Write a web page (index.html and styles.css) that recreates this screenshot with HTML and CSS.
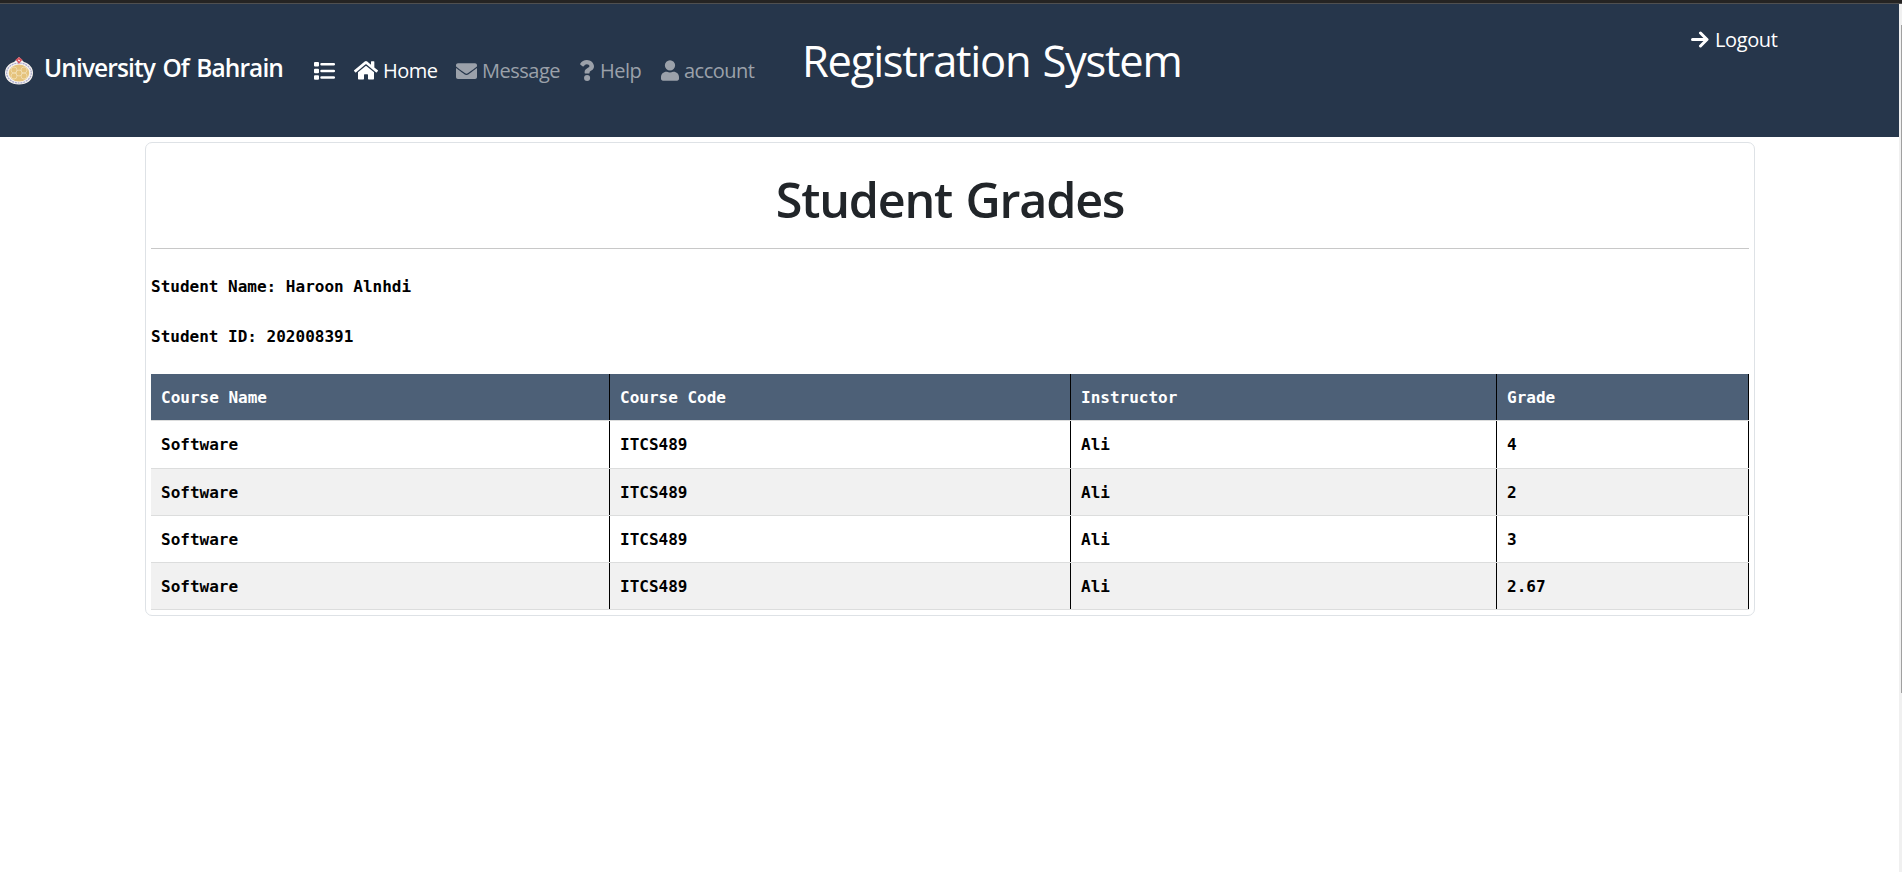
FILE: index.html
```html
<!DOCTYPE html>
<html lang="en">
<head>
<meta charset="utf-8">
<title>Student Grades</title>
<link rel="stylesheet" href="styles.css">
</head>
<body>
<div class="window-edge"></div>
<div class="viewport">
  <div class="page">
    <header class="navbar">
      <a class="brand">
        <svg class="crest" viewBox="0 0 28 28">
          <path d="M14 0 19 5C25 7 28 11 28 16 28 23 22 27.500 14 27.500S0 23 0 16C0 11 3 7 9 5Z" fill="#f6f3ee"/>
          <ellipse cx="14" cy="16" rx="12.300" ry="10" fill="none" stroke="#a9a9d0" stroke-width="1.200" stroke-dasharray="2 .8"/>
          <ellipse cx="14" cy="16" rx="10.200" ry="8.600" fill="#e5c37c"/>
          <g fill="none" stroke="#f3dfb5" stroke-width=".8"><circle cx="14" cy="16" r="3"/><circle cx="9" cy="13" r="3"/><circle cx="19" cy="13" r="3"/><circle cx="9" cy="19" r="3"/><circle cx="19" cy="19" r="3"/></g>
          <path d="m14 0 3.500 2.800-1.700 1.700L14 7l-1.800-2.500-1.700-1.700Z" fill="#d95560"/><path d="m13 3 2 1" stroke="#fff"/>
        </svg>
        <span class="brand-name">University Of Bahrain</span>
      </a>
      <nav class="links">
        <a class="link on list"><svg class="i-list" viewBox="0 0 21 18"><path d="M1 0h3q1 0 1 1v2.500q0 1-1 1H1q-1 0-1-1V1Q0 0 1 0ZM1 6.700h3q1 0 1 1v2.500q0 1-1 1H1q-1 0-1-1V7.700q0-1 1-1ZM1 13.300h3q1 0 1 1v2.500q0 1-1 1H1q-1 0-1-1v-2.500q0-1 1-1ZM7.500 1h12.300a1.250 1.250 0 0 1 0 2.500H7.500a1.250 1.250 0 0 1 0-2.500ZM7.500 7.700h12.300a1.250 1.250 0 0 1 0 2.500H7.500a1.250 1.250 0 0 1 0-2.500ZM7.500 14.300h12.300a1.250 1.250 0 0 1 0 2.500H7.500a1.250 1.250 0 0 1 0-2.500Z"/></svg></a>
        <a class="link on home"><svg class="i-home" viewBox="0 0 576 448"><path d="M280 116 96 268v156c0 9 7 16 16 16h112c9 0 16-7 16-16v-96c0-9 7-16 16-16h64c9 0 16 7 16 16v96c0 9 7 16 16 16h112c9 0 16-7 16-16V268L296 116c-5-4-11-4-16 0Zm292 103-84-69V12c0-7-5-12-12-12h-56c-7 0-12 5-12 12v72L318 10a48 48 0 0 0-61 0L4 219c-5 4-6 12-2 17l26 31c4 5 12 6 17 2L280 75c5-4 11-4 15 0l236 194c5 4 13 3 17-2l26-31c4-5 3-13-2-17Z"/></svg><span>Home</span></a>
        <a class="link message"><svg class="i-mail" viewBox="0 0 512 384"><path d="M502 127c4-3 10 0 10 5v204c0 27-21 48-48 48H48c-27 0-48-21-48-48V132c0-5 6-8 10-5 22 17 52 40 155 114 21 15 56 48 91 47 35 1 71-32 91-47 103-74 133-97 155-114ZM256 256c23 0 57-29 74-41 133-97 143-105 174-129 5-4 8-11 8-18V48c0-27-21-48-48-48H48C21 0 0 21 0 48v20c0 7 3 14 8 18 31 24 41 32 174 129 17 12 51 41 74 41Z"/></svg><span>Message</span></a>
        <a class="link help"><svg class="i-question" viewBox="0 0 14 21"><path d="M6.900 0C3.800 0 1.800 1.300.3 3.600c-.3.400-.2.900.2 1.200l2 1.500c.4.300.9.200 1.200-.1C4.700 4.900 5.400 4.200 6.900 4.200c1.200 0 2.600.8 2.600 1.900 0 .9-.7 1.300-1.900 2C6.200 8.900 4.600 9.900 4.600 12.100v.6c0 .5.400.9.900.9h3.200c.5 0 .9-.4.900-.9v-.4c0-1.600 4.400-1.600 4.400-6C14 2.900 10.500 0 6.900 0ZM7.100 14.900a3 3 0 1 0 0 6.100 3 3 0 0 0 0-6.100Z"/></svg><span>Help</span></a>
        <a class="link account"><svg class="i-user" viewBox="0 0 448 512"><path d="M224 256a128 128 0 1 0 0-256 128 128 0 0 0 0 256Zm90 32h-17a174 174 0 0 1-146 0h-17C60 288 0 348 0 422v42c0 27 21 48 48 48h352c27 0 48-21 48-48v-42c0-74-60-134-134-134Z"/></svg><span>account</span></a>
      </nav>
      <div class="system-title">Registration System</div>
      <a class="logout"><svg class="i-arrow" viewBox="0 0 18 17"><path d="M1.500 8.500H15M9.500 2l6.500 6.500-6.500 6.500" fill="none" stroke="#fff" stroke-width="3" stroke-linecap="round" stroke-linejoin="round"/></svg><span>Logout</span></a>
    </header>
    <main class="card">
      <h1 class="title">Student Grades</h1>
      <p class="info">Student Name: Haroon Alnhdi</p>
      <p class="info">Student ID: 202008391</p>
      <div class="grades">
        <div class="row head"><span>Course Name</span><span>Course Code</span><span>Instructor</span><span>Grade</span></div>
        <div class="row first"><span>Software</span><span>ITCS489</span><span>Ali</span><span>4</span></div>
        <div class="row even"><span>Software</span><span>ITCS489</span><span>Ali</span><span>2</span></div>
        <div class="row"><span>Software</span><span>ITCS489</span><span>Ali</span><span>3</span></div>
        <div class="row even"><span>Software</span><span>ITCS489</span><span>Ali</span><span>2.67</span></div>
      </div>
    </main>
  </div>
  <div class="scrollbar"><div class="thumb"></div></div>
</div>
</body>
</html>
```
FILE: styles.css
```css
* { box-sizing: border-box; }
body { margin: 0; height: 872px; overflow: hidden; background: #fff; font-family: "Open Sans", sans-serif; }
.window-edge { height: 4px; background: #252423; border-bottom: 1px solid #505050; }
.viewport { display: flex; height: 868px; }
.page { flex: 1; }
.scrollbar { width: 3px; background: #f0f0f0; padding: 21px 0 0 2px; }
.thumb { height: 668px; background: #a0a0a0; }

.navbar { display: flex; align-items: flex-start; height: 133px; background: #26364b; color: #fff; white-space: nowrap; }
.brand { display: flex; width: 314px; padding: 53px 0 0 5px; }
.crest { width: 28px; height: 28px; margin-right: 11px; }
.brand-name { font-size: 24.5px; font-weight: 600; line-height: 34px; margin-top: -6px; letter-spacing: -0.9px; word-spacing: 2px; }
.links { display: flex; width: 488px; padding-top: 52px; }
.link, .logout { display: flex; font-size: 20px; line-height: 30px; letter-spacing: -0.5px; }
.link { color: #9ba1aa; }
.link.on { color: #fff; }
.link svg { fill: currentColor; display: block; flex: none; }
.list { width: 40px; }
.home { width: 102px; }
.message { width: 124px; }
.help { width: 81px; }
.i-list { width: 21px; height: 18px; margin-top: 6px; }
.i-home { width: 24px; height: 19px; margin: 5px 5px 0 0; }
.link .i-mail { width: 21px; height: 16px; margin: 7px 5px 0 0; }
.i-question { width: 14px; height: 21px; margin: 4px 6px 0 0; }
.i-user { width: 18px; height: 21px; margin: 4px 5px 0 0; }
.system-title { width: 889px; font-size: 43.5px; line-height: 60px; padding-top: 27px; letter-spacing: -1.25px; word-spacing: 2px; }
.logout { padding-top: 21px; letter-spacing: -0.4px; }
.i-arrow { width: 18px; height: 17px; margin: 6px 6px 0 0; }

.card { width: 1610px; height: 474px; margin: 5px 0 0 145px; padding: 0 5px; border: 1px solid #dee2e6; border-radius: 7px; }
.title { margin: 0 0 20px; height: 106px; padding-top: 23px; border-bottom: 1px solid #c8c8c8; text-align: center; font-size: 48.5px; line-height: 67px; font-weight: 600; color: #212529; letter-spacing: -1.2px; word-spacing: 2px; }
.info, .row { font-family: "DejaVu Sans Mono", monospace; font-size: 16px; font-weight: 700; color: #000; }
.info { margin: 0 0 14px; height: 36px; line-height: 36px; }
.grades { margin-top: 19px; }
.row { display: grid; grid-template-columns: 459px 461px 426px 252px; height: 47px; border-bottom: 1px solid #dcdddd; }
.row span { padding-left: 10px; line-height: 47px; height: 46px; border-right: 1px solid #000; }
.row.first { height: 48px; }
.row.first span { height: 47px; }
.row.head { background: #4d6077; }
.row.head span { color: #fff; }
.row.even { background: #f1f1f1; }
```
